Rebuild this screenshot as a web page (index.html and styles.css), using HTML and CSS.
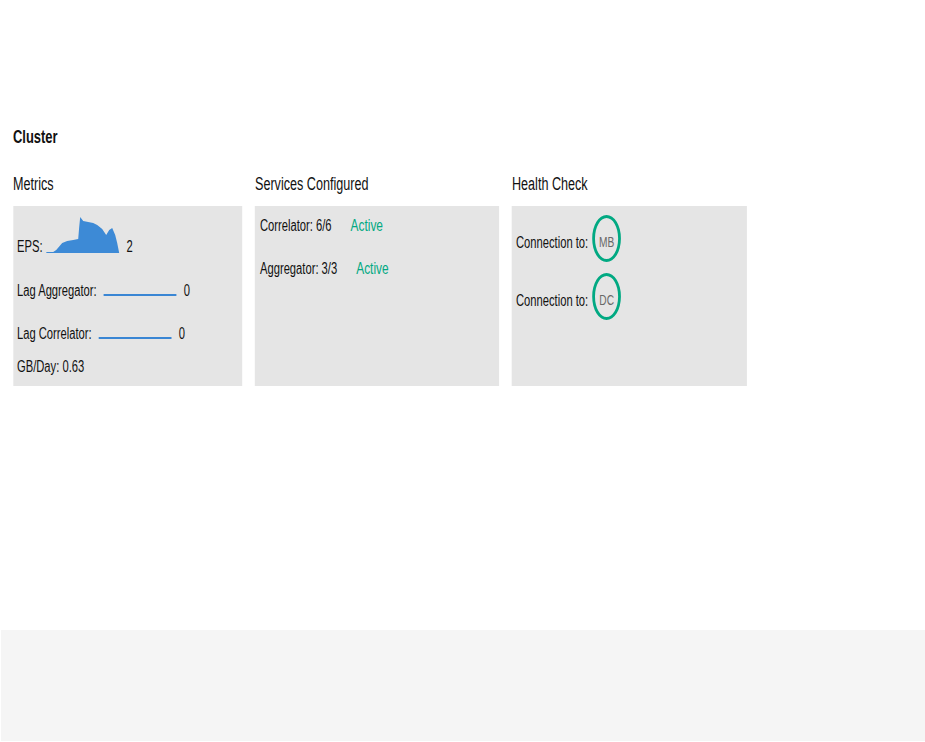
FILE: index.html
```html
<!DOCTYPE html>
<html lang="en">
<head>
<meta charset="utf-8">
<title>Cluster</title>
<link rel="stylesheet" href="styles.css">
</head>
<body>
<div class="page">
  <main class="content">
    <h1 class="title">Cluster</h1>
    <div class="columns">
      <section class="col col-metrics">
        <h2 class="col-title">Metrics</h2>
        <div class="panel panel-metrics">
          <div class="mrow mrow-eps">
            <span class="lbl">EPS:</span>
            <svg class="spark" viewBox="0 0 73 37" preserveAspectRatio="none">
              <path d="M0 36 L7 36 L10 34 L16 27 L21 25 L27 24 L32 23 L33 11 L34 1 L37 5 L42 6 L47 7 L51 9 L56 13 L60 19 L63 14 L66 12 L69 19 L71 27 L73 37 L0 37 Z" fill="#3d8ad6"/>
            </svg>
            <span class="val">2</span>
          </div>
          <div class="mrow mrow-agg">
            <span class="lbl">Lag Aggregator:</span>
            <span class="bar"></span>
            <span class="val">0</span>
          </div>
          <div class="mrow mrow-cor">
            <span class="lbl">Lag Correlator:</span>
            <span class="bar"></span>
            <span class="val">0</span>
          </div>
          <div class="mrow mrow-gb">
            <span class="lbl">GB/Day: 0.63</span>
          </div>
        </div>
      </section>
      <section class="col col-services">
        <h2 class="col-title">Services Configured</h2>
        <div class="panel panel-services">
          <div class="srow">
            <span class="lbl">Correlator: 6/6</span>
            <span class="status">Active</span>
          </div>
          <div class="srow srow-2">
            <span class="lbl">Aggregator: 3/3</span>
            <span class="status">Active</span>
          </div>
        </div>
      </section>
      <section class="col col-health">
        <h2 class="col-title">Health Check</h2>
        <div class="panel panel-health">
          <div class="hrow">
            <span class="lbl">Connection to:</span>
            <span class="ring">MB</span>
          </div>
          <div class="hrow hrow-2">
            <span class="lbl">Connection to:</span>
            <span class="ring">DC</span>
          </div>
        </div>
      </section>
    </div>
  </main>
  <footer class="footer"></footer>
</div>
</body>
</html>
```
FILE: styles.css
```css
* { box-sizing: border-box; }
html, body { margin: 0; padding: 0; background: #ffffff; }
body {
  font-family: "Liberation Sans", Arial, sans-serif;
  color: #111111;
}
.page {
  --sx: 0.70;
  display: flex;
  flex-direction: column;
  min-height: 742px;
  overflow: hidden;
}
/* the dashboard uses a condensed face: squeeze the content horizontally */
.content {
  padding: 126px 0 0 calc(13px / var(--sx));
  transform: scaleX(var(--sx));
  transform-origin: 0 0;
}
.title {
  margin: 0;
  font-size: 18.5px;
  line-height: 22px;
  font-weight: 700;
  color: #111;
}
.columns {
  display: grid;
  grid-template-columns: calc(229px / var(--sx)) calc(244px / var(--sx)) calc(235px / var(--sx));
  column-gap: calc(13px / var(--sx));
  margin-top: 25px;
}
.col-title {
  margin: 0 0 11px 0;
  font-size: 18px;
  line-height: 22px;
  font-weight: 400;
  color: #111;
}
.panel {
  background: #e5e5e5;
  height: 180px;
  font-size: 16px;
}
.panel-metrics { padding: 10px calc(4px / var(--sx)) 0; }
.mrow {
  display: flex;
  align-items: flex-end;
  gap: calc(7px / var(--sx));
}
.mrow .lbl, .mrow .val { line-height: 13px; }
.spark {
  display: block;
  flex: none;
  width: calc(73px / var(--sx));
  height: 37px;
  margin-left: calc(-3px / var(--sx));
}
.bar {
  display: block;
  flex: none;
  width: calc(73px / var(--sx));
  height: 2px;
  background: #3a86d4;
  margin-bottom: 1px;
}
.mrow-agg { margin-top: 31px; }
.mrow-cor { margin-top: 30px; }
.mrow-gb { margin-top: 20px; }

.panel-services { padding: 10px calc(5px / var(--sx)) 0; }
.srow {
  display: flex;
  align-items: baseline;
  gap: calc(19px / var(--sx));
  line-height: 20px;
}
.srow-2 { margin-top: 23px; }
.status {
  color: #01a982;
  font-size: 17px;
}

.panel-health { padding: 9px calc(4px / var(--sx)) 0; }
.hrow {
  display: flex;
  align-items: center;
  gap: calc(4px / var(--sx));
  line-height: 20px;
}
.hrow .lbl { margin-top: 8px; }
.hrow-2 { margin-top: 11px; }
.ring {
  display: flex;
  align-items: center;
  justify-content: center;
  flex: none;
  width: calc(29px / var(--sx));
  height: 47px;
  border: 3px solid #01a982;
  border-width: 3px calc(3px / var(--sx));
  border-radius: 50%;
  color: #686868;
  font-size: 14.5px;
  padding-top: 6px;
}
.footer {
  margin-top: auto;
  margin-left: 1px;
  margin-bottom: 1px;
  height: 111px;
  background: #f5f5f5;
}
```
